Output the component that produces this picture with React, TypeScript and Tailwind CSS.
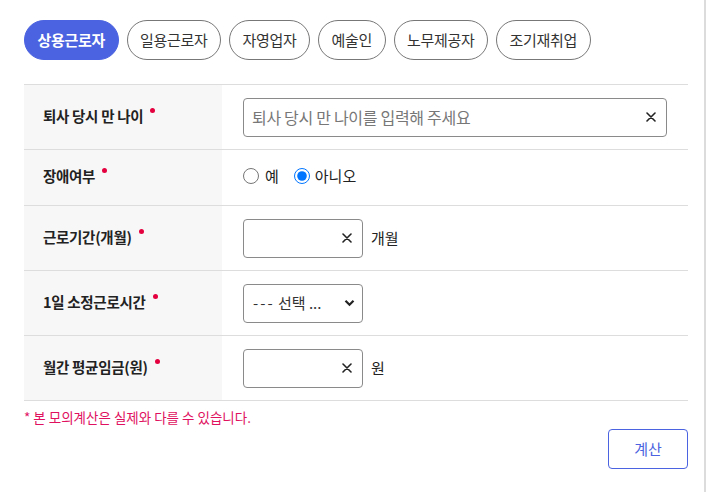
import { useState } from "react";

const tabs = ["상용근로자", "일용근로자", "자영업자", "예술인", "노무제공자", "조기재취업"];

const XIcon = () => (
  <svg width="10" height="10" viewBox="0 0 10 10" className="shrink-0">
    <path d="M1 1L9 9M9 1L1 9" stroke="#222" strokeWidth="1.6" strokeLinecap="round" />
  </svg>
);

const Label = ({ text }: { text: string }) => (
  <div className="w-[198px] shrink-0 bg-[#f7f7f7] pl-[19px] flex items-center">
    <span className="text-[14.5px] font-bold text-[#222] tracking-[-0.3px] -mt-[3px]">{text}</span>
    <span className="ml-[7px] -mt-[14px] w-[5px] h-[5px] rounded-full bg-[#e4003f]" />
  </div>
);

const SmallInput = ({ unit }: { unit: string }) => (
  <div className="flex items-center">
    <div className="w-[120px] h-[39px] border border-[#8a8a8a] rounded-[4px] flex items-center justify-end pr-[10px]">
      <XIcon />
    </div>
    <span className="ml-[8px] text-[15px] text-[#222]">{unit}</span>
  </div>
);

export default function App() {
  const [active, setActive] = useState(0);
  const [disabled, setDisabled] = useState("no");

  return (
    <div
      className="w-[706px] h-[492px] bg-white border-r-2 border-[#dcdcdc] text-[#222]"
      style={{ fontFamily: '"Noto Sans CJK KR", "Noto Sans", sans-serif' }}
    >
      <div className="pl-[24px] pt-[20px] flex gap-2">
        {tabs.map((t, i) => (
          <button
            key={t}
            onClick={() => setActive(i)}
            className={
              i === active
                ? "h-[40px] px-[12.5px] rounded-full bg-[#4b63e0] border border-[#4b63e0] text-white text-[15px] font-bold tracking-[-0.3px]"
                : "h-[40px] px-[12.5px] rounded-full bg-white border border-[#777] text-[#333] text-[15px] tracking-[-0.3px]"
            }
          >
            {t}
          </button>
        ))}
      </div>

      <div className="mx-[24px] mt-[24px] w-[664px] border-t border-[#dddddd]">
        <div className="flex h-[65px] border-b border-[#dddddd]">
          <Label text="퇴사 당시 만 나이" />
          <div className="flex-1 flex items-center pl-[21px] pr-[21px]">
            <div className="w-full h-[39px] border border-[#8a8a8a] rounded-[4px] flex items-center justify-between pl-[8px] pr-[10px]">
              <span className="text-[16px] text-[#777] tracking-[-0.3px]">퇴사 당시 만 나이를 입력해 주세요</span>
              <XIcon />
            </div>
          </div>
        </div>

        <div className="flex h-[56px] border-b border-[#dddddd]">
          <Label text="장애여부" />
          <div className="flex-1 flex items-center pl-[21px] text-[15px] -mt-[3px]">
            <label className="flex items-center">
              <input
                type="radio"
                name="d"
                checked={disabled === "yes"}
                onChange={() => setDisabled("yes")}
                className="w-[16px] h-[16px] m-0 accent-[#0075ff]"
              />
              <span className="ml-[6px]">예</span>
            </label>
            <label className="flex items-center ml-[15px]">
              <input
                type="radio"
                name="d"
                checked={disabled === "no"}
                onChange={() => setDisabled("no")}
                className="w-[16px] h-[16px] m-0 accent-[#0075ff]"
              />
              <span className="ml-[5px]">아니오</span>
            </label>
          </div>
        </div>

        <div className="flex h-[65px] border-b border-[#dddddd]">
          <Label text="근로기간(개월)" />
          <div className="flex-1 flex items-center pl-[21px]">
            <SmallInput unit="개월" />
          </div>
        </div>

        <div className="flex h-[65px] border-b border-[#dddddd]">
          <Label text="1일 소정근로시간" />
          <div className="flex-1 flex items-center pl-[21px]">
            <div className="w-[120px] h-[39px] border border-[#8a8a8a] rounded-[4px] flex items-center justify-between pl-[9px] pr-[7px]">
              <span className="text-[15px] text-[#333]">
                <span className="tracking-[2px]">---</span> 선택 ...
              </span>
              <svg width="11" height="8" viewBox="0 0 11 8">
                <path d="M1.5 1.8L5.5 5.8L9.5 1.8" stroke="#222" strokeWidth="2.2" fill="none" />
              </svg>
            </div>
          </div>
        </div>

        <div className="flex h-[65px] border-b border-[#dddddd]">
          <Label text="월간 평균임금(원)" />
          <div className="flex-1 flex items-center pl-[21px]">
            <SmallInput unit="원" />
          </div>
        </div>
      </div>

      <p className="ml-[24px] mt-[6px] text-[13.5px] text-[#e0115f]">
        * 본 모의계산은 실제와 다를 수 있습니다.
      </p>

      <div className="flex justify-end pr-[16px] mt-[2px]">
        <button className="w-[80px] h-[40px] border border-[#4b63e0] rounded-[4px] text-[#4b63e0] text-[15px]">
          계산
        </button>
      </div>
    </div>
  );
}
